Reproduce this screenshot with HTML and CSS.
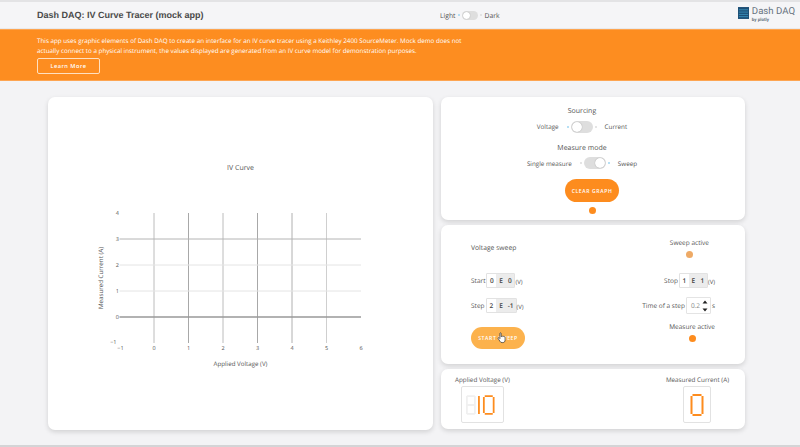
FILE: index.html
```html
<!DOCTYPE html>
<html lang="en">
<head>
  <meta charset="UTF-8">
  <meta name="viewport" content="width=device-width, initial-scale=1.0">
  <title>Dash DAQ: IV Curve Tracer (mock app)</title>
  <link rel="stylesheet" href="styles.css">
</head>
<body>
  <header class="topbar">
    <h1 class="title">Dash DAQ: IV Curve Tracer (mock app)</h1>
    <div class="toggle-row theme-toggle">
      <span>Light</span>
      <span class="dot on"></span><span class="switch"><span class="knob"></span></span><span class="dot"></span>
      <span>Dark</span>
    </div>
    <div class="logo">
      <svg class="logo-mark" viewBox="0 0 12 13">
        <rect width="12" height="13" fill="#1d4f76"/>
        <path d="M1 3h10M1 5.500h10M1 8h10M1 10.500h10" stroke="#3f9fc9" stroke-width="0.8"/>
      </svg>
      <div class="logo-text">
        <span class="logo-name">Dash DAQ</span>
        <span class="logo-by">by plotly</span>
      </div>
    </div>
  </header>

  <section class="banner">
    <p>This app uses graphic elements of Dash DAQ to create an interface for an IV curve tracer using a Keithley 2400 SourceMeter. Mock demo does not actually connect to a physical instrument, the values displayed are generated from an IV curve model for demonstration purposes.</p>
    <a class="learn-more">Learn More</a>
  </section>

  <main class="main">
    <div class="card plot-card">
      <svg class="plot" viewBox="48 97 385 333">
        <text class="plot-title" x="240.500" y="170" text-anchor="middle">IV Curve</text>
        <g stroke-width="1">
          <line x1="154" y1="213" x2="154" y2="343" stroke="#bcbcbc"/>
          <line x1="188.500" y1="213" x2="188.500" y2="343" stroke="#a8a8a8"/>
          <line x1="223" y1="213" x2="223" y2="343" stroke="#bcbcbc"/>
          <line x1="257.500" y1="213" x2="257.500" y2="343" stroke="#a8a8a8"/>
          <line x1="292" y1="213" x2="292" y2="343" stroke="#b0b0b0"/>
          <line x1="326.500" y1="213" x2="326.500" y2="343" stroke="#cfcfcf"/>
          <line x1="119.500" y1="239" x2="361" y2="239" stroke="#b4b4b4"/>
          <line x1="119.500" y1="265" x2="361" y2="265" stroke="#e4e4e4"/>
          <line x1="119.500" y1="291" x2="361" y2="291" stroke="#e4e4e4"/>
          <line x1="119.500" y1="317" x2="361" y2="317" stroke="#999" stroke-width="1.5"/>
        </g>
        <g class="tick" text-anchor="end">
          <text x="119" y="215">4</text>
          <text x="119" y="241">3</text>
          <text x="119" y="267">2</text>
          <text x="119" y="293">1</text>
          <text x="119" y="319">0</text>
          <text x="116.500" y="344">−1</text>
        </g>
        <g class="tick" text-anchor="middle">
          <text x="120.500" y="349.500">−1</text>
          <text x="154" y="349.500">0</text>
          <text x="188.500" y="349.500">1</text>
          <text x="223" y="349.500">2</text>
          <text x="257.500" y="349.500">3</text>
          <text x="292" y="349.500">4</text>
          <text x="326.500" y="349.500">5</text>
          <text x="361" y="349.500">6</text>
        </g>
        <text class="axis-label" x="240.500" y="366" text-anchor="middle">Applied Voltage (V)</text>
        <text class="axis-label" text-anchor="middle" transform="translate(103 278) rotate(-90)">Measured Current (A)</text>
      </svg>
    </div>

    <div class="side">
      <div class="card source-card">
        <div class="source-group">
          <div class="group-title">Sourcing</div>
          <div class="toggle-row">
            <span>Voltage</span>
            <span class="dot on"></span><span class="switch"><span class="knob"></span></span><span class="dot"></span>
            <span>Current</span>
          </div>
          <div class="group-title second">Measure mode</div>
          <div class="toggle-row">
            <span>Single measure</span>
            <span class="dot"></span><span class="switch right"><span class="knob"></span></span><span class="dot on"></span>
            <span>Sweep</span>
          </div>
        </div>
        <button class="pill clear-btn">Clear graph</button>
        <span class="led"></span>
      </div>

      <div class="card sweep-card">
        <div class="sweep-title">Voltage sweep</div>
        <div class="status status-sweep">
          <span>Sweep active</span>
          <span class="led dim"></span>
        </div>

        <div class="field">Start
          <span class="sci"><b>0</b><i>E</i><i>0</i></span><small>(V)</small>
        </div>
        <div class="field right">Stop
          <span class="sci"><b>1</b><i>E</i><i>1</i></span><small>(V)</small>
        </div>

        <div class="field">Step
          <span class="sci wide"><b>2</b><i>E</i><i>-1</i></span><small>(V)</small>
        </div>
        <div class="field right">Time of a step
          <span class="spin">0.2
            <svg class="spin-arrows" viewBox="0 0 6 12"><path d="M3 0.500 5.500 3.500H0.500ZM3 11.500 0.500 8.500H5.500Z" fill="#222"/></svg>
          </span><em>s</em>
        </div>

        <div class="start-wrap">
          <button class="pill start-btn">Start sweep</button>
          <svg class="hand" viewBox="0 0 12 14">
            <path d="M3.500 1.500c0-1 1.500-1 1.500 0v4l.6-.4c.4-.6 1.300-.4 1.400.2.400-.5 1.300-.3 1.400.3.500-.3 1.300 0 1.300.7v3.200c0 1.800-1 3-2.800 3H6c-1.200 0-1.900-.6-2.500-1.600L1.400 7.700c-.5-.8.500-1.500 1.200-.9l.9.9z" fill="#fff" stroke="#333" stroke-width="0.9"/>
          </svg>
        </div>
        <div class="status status-measure">
          <span>Measure active</span>
          <span class="led"></span>
        </div>
      </div>

      <div class="card readout-card">
        <div class="readout">
          <div class="readout-label">Applied Voltage (V)</div>
          <div class="display display-v">
            <svg class="digits" viewBox="0 0 37 24">
              <path class="ghost" d="M1 2h9M1 12h9M1 22h9M1 2v20M10 2v20"/>
              <path class="seg" d="M14.500 2v20"/>
              <path class="seg" d="M21 2h9M21 22h9M20 3v18M31 3v18"/>
            </svg>
          </div>
        </div>
        <div class="readout readout-right">
          <div class="readout-label">Measured Current (A)</div>
          <div class="display display-a">
            <svg class="digits digit-one" viewBox="0 0 14 24">
              <path class="seg" d="M2.500 2h9M2.500 22h9M1.500 3v18M12.500 3v18"/>
            </svg>
          </div>
        </div>
      </div>
    </div>
  </main>
</body>
</html>
```
FILE: styles.css
```css
* {
  box-sizing: border-box;
}

body {
  margin: 0;
  height: 447px;
  overflow: hidden;
  background-color: #f3f3f5;
  color: #555;
  font-family: "Open Sans", sans-serif;
  font-size: 6.500px;
  text-rendering: geometricPrecision;
  border-bottom: 2px solid #d4d4d6;
}

.topbar {
  height: 29px;
  padding: 0 5px 0 37px;
  display: flex;
  align-items: center;
  background-color: #f5f5f7;
  border-top: 2px solid #e3e3e5;
  border-bottom: 1px solid #e9e9eb;
  position: relative;
}

.title {
  margin: 0;
  width: 403px;
  font-family: "Liberation Sans", sans-serif;
  font-size: 9px;
  font-weight: bold;
  color: #4a4a4a;
}

.toggle-row {
  display: flex;
  align-items: center;
  justify-content: center;
  white-space: nowrap;
  font-size: 6.300px;
}

.toggle-row > span:first-child {
  margin-right: 6px;
}

.toggle-row > span:last-child {
  margin-left: 6px;
}

.theme-toggle {
  font-size: 6.800px;
}

.theme-toggle > span:first-child {
  margin-right: 0;
}

.theme-toggle > span:last-child {
  margin-left: 1px;
}

.dot {
  width: 2px;
  height: 2px;
  margin: 0 2px;
  border-radius: 50%;
  background-color: #dcdcdc;
}

.dot.on {
  background-color: #9fd6f2;
}

.switch {
  width: 22px;
  height: 12px;
  padding: 1px;
  border-radius: 6px;
  background-color: #dedede;
  display: flex;
}

.theme-toggle .switch {
  width: 16px;
  height: 9px;
}

.switch.right {
  justify-content: flex-end;
}

.knob {
  height: 100%;
  aspect-ratio: 1;
  border-radius: 50%;
  background-color: #fff;
  box-shadow: 0 0 1px #888;
}

.logo {
  margin-left: auto;
  display: flex;
  gap: 3px;
}

.logo-mark {
  width: 11px;
  height: 12px;
}

.logo-text {
  display: flex;
  flex-direction: column;
  font-family: "Roboto", sans-serif;
  line-height: 1;
}

.logo-name {
  font-size: 9.600px;
  color: #66727e;
}

.logo-by {
  margin-top: 2px;
  font-size: 4.500px;
  font-weight: bold;
  color: #66727e;
}

.banner {
  height: 52px;
  padding: 6px 0 0 37px;
  background-color: #fd8d20;
  border-top: 1px solid #fda552;
  border-bottom: 1px solid #fda552;
  color: #fff;
}

.banner p {
  margin: 0 0 2px;
  width: 432px;
  font-size: 6.270px;
  line-height: 10px;
}

.learn-more {
  display: block;
  width: 63px;
  height: 16px;
  border: 1px solid #ffe0c0;
  border-radius: 2px;
  text-align: center;
  line-height: 15px;
  font-size: 5.600px;
  font-weight: 600;
  letter-spacing: 0.5px;
}

.main {
  padding: 16px 55px 0 48px;
  display: flex;
  gap: 8px;
}

.card {
  background-color: #fff;
  border-radius: 7px;
  box-shadow: 0 2px 5px rgba(0, 0, 0, 0.14);
}

.plot-card {
  width: 385px;
  height: 333px;
}

.plot {
  display: block;
  width: 385px;
  height: 333px;
}

.plot text {
  font-family: "Open Sans", sans-serif;
  fill: #555;
}

.plot-title {
  font-size: 7px;
}

.tick {
  font-size: 5.500px;
}

.axis-label {
  font-size: 6.200px;
}

.side {
  width: 304px;
  display: flex;
  flex-direction: column;
  gap: 5px;
}

.source-card {
  height: 123px;
  padding: 9.500px 2px 0 0;
  display: flex;
  flex-direction: column;
  align-items: center;
}

.source-group {
  width: 100%;
  padding-right: 20px;
  text-align: center;
}

.group-title {
  height: 10px;
  line-height: 10px;
  margin-bottom: 4px;
  font-size: 7px;
}

.group-title.second {
  margin-top: 11px;
  margin-bottom: 3.500px;
}

.pill {
  display: block;
  padding: 0;
  border: none;
  border-radius: 12px;
  color: #fff;
  font-family: "Open Sans", sans-serif;
  font-size: 5.100px;
  font-weight: 600;
  letter-spacing: 0.6px;
  text-transform: uppercase;
}

.clear-btn {
  width: 54px;
  height: 23px;
  margin-top: 10px;
  background-color: #fd8c1e;
}

.led {
  display: block;
  width: 7px;
  height: 7px;
  margin-top: 5px;
  border-radius: 50%;
  background-color: #fd8c1e;
}

.led.dim {
  background-color: #eeaa66;
}

.sweep-card {
  height: 139px;
  padding: 13px 30px 0;
  display: grid;
  grid-template-columns: 1fr auto;
  grid-template-rows: 30px 25px 25px 30px;
  align-items: center;
}

.sweep-title {
  margin-bottom: 12px;
  font-size: 6.750px;
}

.status {
  display: flex;
  flex-direction: column;
  align-items: center;
  justify-self: end;
  align-self: start;
}

.status .led {
  margin-top: 3.500px;
}

.status-sweep {
  margin-right: 6px;
}

.status-measure {
  margin-top: 4px;
}

.field {
  display: flex;
  align-items: center;
}

.field.right {
  justify-content: flex-end;
}

.sci {
  width: 29px;
  height: 15px;
  margin-left: 1px;
  display: flex;
  align-items: center;
  background-color: #ececec;
  border: 1px solid #e2e2e2;
  border-radius: 1px;
  color: #444;
  font-size: 6.500px;
  font-weight: 600;
}

.sci.wide {
  width: 31px;
}

.sci b,
.sci i {
  flex: 1;
  text-align: center;
  font-style: normal;
  font-weight: 600;
}

.sci b {
  height: 100%;
  line-height: 13px;
  background-color: #fff;
}

.field small {
  margin-top: 3px;
  font-size: 6px;
}

.spin {
  width: 25px;
  height: 17px;
  margin-left: 1px;
  padding-left: 4px;
  display: flex;
  align-items: center;
  justify-content: space-between;
  border: 1px solid #e4e4e4;
  border-radius: 1px;
  background-color: #fff;
  color: #888;
  font-size: 6.500px;
}

.spin-arrows {
  width: 6px;
  height: 12px;
  margin-right: 2px;
}

.field em {
  font-style: normal;
  margin-left: 1px;
}

.start-wrap {
  position: relative;
  width: 54px;
  height: 22px;
  align-self: start;
  margin-top: 9px;
}

.start-btn {
  width: 54px;
  height: 22px;
  background-color: #fcb24d;
}

.hand {
  position: absolute;
  left: 26px;
  top: 5px;
  width: 10px;
  height: 12px;
}

.readout-card {
  height: 60px;
  padding: 6px 16px 0 14px;
  display: flex;
  justify-content: space-between;
  font-size: 6.300px;
}

.readout {
  display: flex;
  flex-direction: column;
}

.readout-right {
  align-items: center;
}

.readout-label {
  height: 11px;
  line-height: 9px;
  white-space: nowrap;
}

.display {
  height: 37px;
  display: flex;
  align-items: center;
  justify-content: center;
  border: 1px solid #e2e2e2;
  border-radius: 2px;
  background-color: #fff;
}

.display-v {
  width: 43px;
  margin-left: 6px;
}

.display-a {
  width: 28px;
}

.digits {
  width: 33px;
  height: 24px;
}

.digit-one {
  width: 14px;
}

.ghost,
.seg {
  fill: none;
  stroke-width: 2;
}

.ghost {
  stroke: #f0f0f0;
}

.seg {
  stroke: #fd8c1e;
}
```
